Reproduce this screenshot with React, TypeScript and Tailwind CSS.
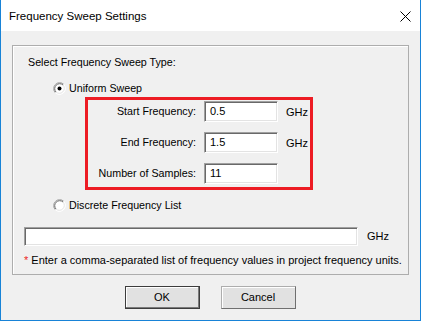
import React from "react";

function Radio({ checked }: { checked?: boolean }) {
  return (
    <svg width="13" height="13" viewBox="0 0 13 13" className="shrink-0">
      <circle cx="6.5" cy="6.5" r="6" fill="#ffffff" />
      <path d="M2.26 10.74 A6 6 0 0 1 10.74 2.26" fill="none" stroke="#a0a0a0" strokeWidth="1" />
      <path d="M10.74 2.26 A6 6 0 0 1 2.26 10.74" fill="none" stroke="#ffffff" strokeWidth="1" />
      <path d="M2.97 10.03 A5 5 0 0 1 10.03 2.97" fill="none" stroke="#696969" strokeWidth="1" />
      <path d="M10.03 2.97 A5 5 0 0 1 2.97 10.03" fill="none" stroke="#e3e3e3" strokeWidth="1" />
      {checked && <circle cx="6.5" cy="6.5" r="2" fill="#000000" />}
    </svg>
  );
}

function Field({ value, className }: { value?: string; className: string }) {
  return (
    <div
      className={
        "bg-white border border-[#a0a0a0] border-b-white border-r-white shadow-[inset_1px_1px_0_#696969,inset_-1px_-1px_0_#e3e3e3] flex items-center pl-[5px] text-[11px] leading-[13px] text-black " +
        className
      }
    >
      {value}
    </div>
  );
}

function Row({ label, value, unit }: { label: string; value: string; unit?: string }) {
  return (
    <div className="flex items-center h-[21px]">
      <div className="w-[108px] text-right text-[10.7px] leading-[13px] text-black">{label}</div>
      <Field value={value} className="ml-[8px] w-[74px] h-[21px]" />
      {unit && <div className="ml-[8px] text-[11px] leading-[13px] text-black mt-[1px]">{unit}</div>}
    </div>
  );
}

export default function App() {
  return (
    <div
      className="w-[421px] h-[321px] flex flex-col border-l border-r border-b border-[#1883d7] bg-[#f0f0f0] overflow-hidden"
      style={{ fontFamily: '"Liberation Sans", Arial, sans-serif' }}
    >
      <div className="h-[31px] bg-white flex items-center justify-between pl-[8px] pr-[9px] shrink-0">
        <span className="text-[11.5px] leading-[14px] text-black mt-[1px]">Frequency Sweep Settings</span>
        <svg width="11" height="11" viewBox="0 0 11 11" className="mt-[1px]">
          <path d="M0.5 0.5 L10.5 10.5 M10.5 0.5 L0.5 10.5" stroke="#000" strokeWidth="1" />
        </svg>
      </div>
      <div className="flex-1 flex flex-col">
        <div className="mt-[14px] mx-[11px] h-[230px] border border-[#adadad] shadow-[inset_1px_1px_0_#ffffff] flex flex-col pl-[11px] pt-[9px]">
          <div className="ml-[4px] h-[14px] text-[10.7px] leading-[14px] text-black">Select Frequency Sweep Type:</div>
          <div className="mt-[12px] ml-[29px] h-[14px] flex items-center gap-[3px]">
            <Radio checked />
            <span className="text-[10.7px] leading-[14px] text-black">Uniform Sweep</span>
          </div>
          <div className="mt-[2px] ml-[61px] w-[228px] h-[93px] border-[3px] border-[#ed1c24] flex flex-col pt-[1px] gap-[10px]">
            <Row label="Start Frequency:" value="0.5" unit="GHz" />
            <Row label="End Frequency:" value="1.5" unit="GHz" />
            <Row label="Number of Samples:" value="11" />
          </div>
          <div className="mt-[8px] ml-[29px] h-[14px] flex items-center gap-[3px]">
            <Radio />
            <span className="text-[10.7px] leading-[14px] text-black">Discrete Frequency List</span>
          </div>
          <div className="mt-[15px] flex items-center">
            <Field className="w-[334px] h-[19px]" />
            <span className="ml-[9px] text-[11px] leading-[13px] text-black">GHz</span>
          </div>
          <div className="mt-[7px] h-[14px] text-[11px] leading-[14px] text-black whitespace-nowrap">
            <span className="text-[#ed1c24]">*</span> Enter a comma-separated list of frequency values in project frequency units.
          </div>
        </div>
        <div className="mt-[11px] flex justify-center gap-[21px] pr-[1px]">
          <button className="w-[75px] h-[23px] bg-[#e1e1e1] border border-[#3c3c3c] shadow-[inset_-1px_-1px_0_#7a7a7a,inset_1px_1px_0_#ffffff] text-[11px] leading-[13px] text-black">
            OK
          </button>
          <button className="w-[75px] h-[23px] bg-[#e1e1e1] border border-[#adadad] border-b-[#6f6f6f] border-r-[#6f6f6f] shadow-[inset_1px_1px_0_#ffffff] text-[11px] leading-[13px] text-black">
            Cancel
          </button>
        </div>
      </div>
    </div>
  );
}
